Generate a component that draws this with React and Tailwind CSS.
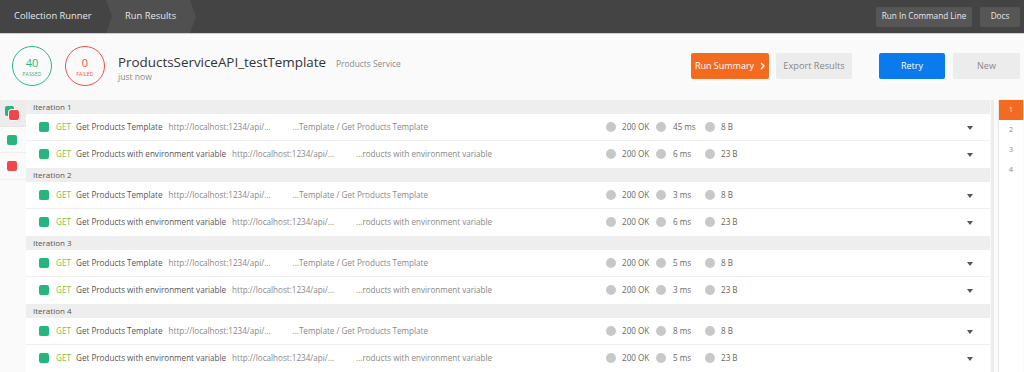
import React from "react";

const iterations = [
  ["45 ms", "6 ms"],
  ["3 ms", "6 ms"],
  ["5 ms", "3 ms"],
  ["8 ms", "5 ms"],
];

const requests = [
  { name: "Get Products Template", path: "...Template / Get Products Template", size: "8 B" },
  { name: "Get Products with environment variable", path: "...roducts with environment variable", size: "23 B" },
];

const Dot = () => <span className="w-[10px] h-[10px] rounded-full bg-[#c8c8c8] shrink-0" />;

const Row = ({ req, time, last }) => (
  <div className={`h-[27px] bg-white flex items-center pl-[13px] ${last ? "" : "border-b border-[#efefef]"}`}>
    <div className="w-[567px] flex items-center overflow-hidden whitespace-nowrap">
      <span className="w-[10px] h-[10px] rounded-[2px] bg-[#26b47f] shrink-0" />
      <span className="ml-[7px] w-[20px] text-[8.1px] text-[#7dc242]">GET</span>
      <span className="text-[8.1px] text-[#555]">{req.name}</span>
      <span className="ml-[6px] w-[124px] shrink-0 text-[8.1px] text-[#888]">http://localhost:1234/api/...</span>
      <span className="text-[8.1px] text-[#888]">{req.path}</span>
    </div>
    <div className="flex items-center text-[8.1px] text-[#666] whitespace-nowrap">
      <Dot />
      <span className="ml-[6px] w-[34px]">200 OK</span>
      <Dot />
      <span className="ml-[7px] w-[32px]">{time}</span>
      <Dot />
      <span className="ml-[6px]">{req.size}</span>
    </div>
    <svg className="ml-auto mr-[17px] mt-[1px]" width="6" height="4" viewBox="0 0 6 4">
      <polygon points="0,0 6,0 3,4" fill="#555" />
    </svg>
  </div>
);

const Circle = ({ value, label, color }) => (
  <div className={`w-[40px] h-[40px] rounded-full border-[1.5px] ${color} flex flex-col items-center justify-center`}>
    <span className="text-[11px] leading-[12px] mt-[2px]">{value}</span>
    <span className="text-[5px] leading-[6px] mt-[2px] tracking-[0.2px]">{label}</span>
  </div>
);

export default function App() {
  return (
    <div className="w-[1024px] h-[372px] overflow-hidden bg-[#fafafa] font-['Open_Sans',sans-serif]">
      {/* top bar */}
      <div className="h-[34px] bg-[#444444] border-b border-[#cfcfcf] flex items-stretch">
        <div className="w-[112px] flex items-center pl-[14px] text-[9.4px] text-[#e6e6e6]">Collection Runner</div>
        <div className="-ml-[6px] w-[90px] bg-[#505050] flex items-center pl-[19px] text-[9.4px] text-[#e6e6e6] [clip-path:polygon(0_0,calc(100%_-_6px)_0,100%_50%,calc(100%_-_6px)_100%,0_100%,6px_50%)]">
          Run Results
        </div>
        <div className="ml-auto flex items-center gap-[8px] pr-[4px]">
          <button className="h-[20px] w-[96px] rounded-[2px] bg-[#565656] text-[8.2px] text-[#e8e8e8]">Run In Command Line</button>
          <button className="h-[20px] w-[40px] rounded-[2px] bg-[#565656] text-[8.2px] text-[#e8e8e8]">Docs</button>
        </div>
      </div>

      {/* header */}
      <div className="h-[66px] flex items-start pt-[12px] pl-[12px]">
        <Circle value="40" label="PASSED" color="border-[#2db67c] text-[#2db67c]" />
        <div className="ml-[13px]">
          <Circle value="0" label="FAILED" color="border-[#ee4f4f] text-[#ee4f4f]" />
        </div>
        <div className="ml-[13px] mt-[7px] flex flex-col">
          <div className="flex items-baseline">
            <span className="text-[13.4px] leading-[18px] text-[#333]">ProductsServiceAPI_testTemplate</span>
            <span className="ml-[10px] text-[8.4px] text-[#8a8a8a]">Products Service</span>
          </div>
          <span className="text-[8.6px] text-[#8a8a8a] leading-[12px]">just now</span>
        </div>
        <div className="ml-auto mt-[7px] flex items-center">
          <button className="h-[26px] w-[78px] rounded-[2px] bg-[#f26b21] text-white text-[9px] flex items-center justify-center gap-[6px]">
            Run Summary
            <svg width="5" height="8" viewBox="0 0 5 8">
              <polyline points="1,1 4,4 1,7" fill="none" stroke="#fff" strokeWidth="1.3" />
            </svg>
          </button>
          <button className="ml-[7px] h-[26px] w-[76px] rounded-[2px] bg-[#ececec] text-[#888] text-[9.2px]">Export Results</button>
          <button className="ml-[27px] h-[26px] w-[66px] rounded-[2px] bg-[#097bed] text-white text-[9px]">Retry</button>
          <button className="ml-[8px] mr-[4px] h-[26px] w-[67px] rounded-[2px] bg-[#ececec] text-[#888] text-[9px]">New</button>
        </div>
      </div>

      {/* body */}
      <div className="flex h-[272px]">
        {/* sidebar */}
        <div className="w-[26px] shrink-0 flex flex-col">
          <div className="h-[27px] bg-[#ececec] border-b border-[#e6e6e6] relative">
            <span className="absolute left-[5px] top-[6px] w-[9px] h-[10px] rounded-[2px] bg-[#26b47f]" />
            <span className="absolute left-[8px] top-[9px] w-[12px] h-[12px] rounded-[3px] bg-[#f0484a] border border-white" />
          </div>
          <div className="h-[26px] border-b border-[#eeeeee] flex items-center pl-[7px]">
            <span className="w-[10px] h-[10px] rounded-[2px] bg-[#26b47f]" />
          </div>
          <div className="h-[27px] border-b border-[#eeeeee] flex items-center pl-[7px]">
            <span className="w-[10px] h-[10px] rounded-[2px] bg-[#f0484a]" />
          </div>
        </div>

        {/* list */}
        <div className="w-[964px] shrink-0 flex flex-col">
          {iterations.map((times, i) => (
            <div key={i}>
              <div className="h-[14px] bg-[#eeeeee] flex items-center pl-[7px] text-[8px] text-[#555]">Iteration {i + 1}</div>
              {requests.map((req, j) => (
                <Row key={j} req={req} time={times[j]} last={j === requests.length - 1} />
              ))}
            </div>
          ))}
        </div>

        <div className="ml-[1px] w-[3px] bg-[#ececec]" />

        {/* pagination */}
        <div className="ml-[4px] w-[25px] bg-white border-l border-[#e6e6e6] flex flex-col text-[7px] text-[#888]">
          {[1, 2, 3, 4].map((n) => (
            <div key={n} className={`h-[20px] flex items-center justify-center ${n === 1 ? "bg-[#f26b21] text-white" : ""}`}>
              {n}
            </div>
          ))}
        </div>
      </div>
    </div>
  );
}
